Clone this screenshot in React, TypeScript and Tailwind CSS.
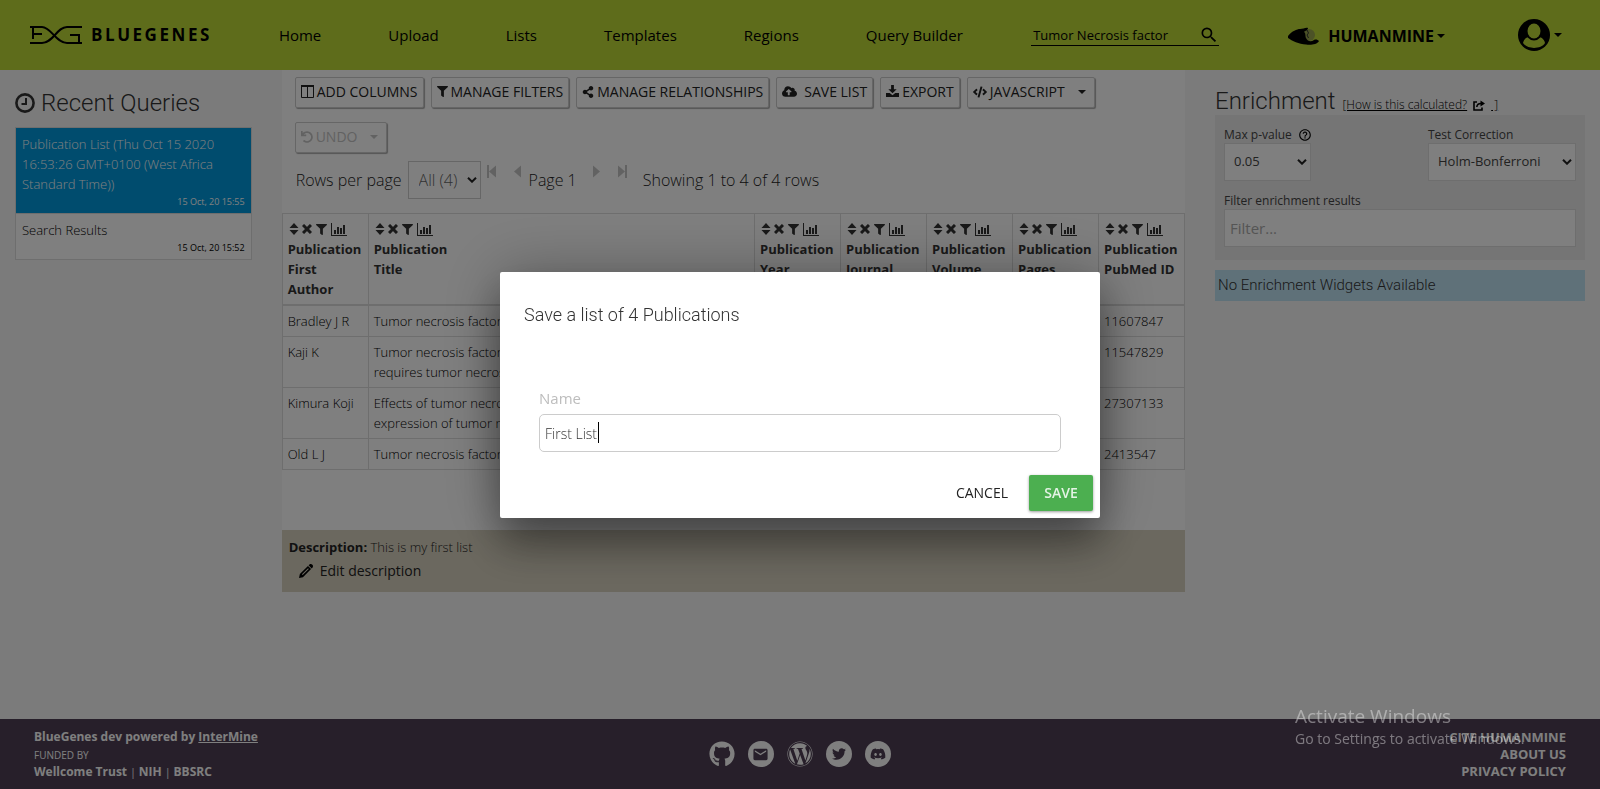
import React from "react";
import {
  FaCloudUploadAlt,
  FaCode,
  FaDiscord,
  FaFilter,
  FaGithub,
  FaShareAlt,
  FaTwitter,
  FaUndo,
  FaWordpress,
} from "react-icons/fa";
import { MdEmail, MdHelpOutline, MdSearch } from "react-icons/md";
import { ImPencil } from "react-icons/im";

type IconProps = { className?: string };

function Logo() {
  return (
    <svg viewBox="0 0 54 20" className="h-5 w-[54px]" fill="none" stroke="currentColor" strokeWidth="2" aria-hidden="true">
      <path d="M1 2H13C22 2 27 18 38 18H53M50 18V10H41" />
      <path d="M1 18H13C24 18 28 2 38 2H53" />
      <path d="M4 2V14M4 9H13" />
    </svg>
  );
}

function ClockIcon({ className }: IconProps) {
  return (
    <svg viewBox="0 0 20 20" className={className} fill="none" stroke="currentColor" aria-hidden="true">
      <circle cx="10" cy="10" r="8.6" strokeWidth="2.6" />
      <path d="M11 5V11H6.5" strokeWidth="2" />
    </svg>
  );
}

function ColumnsIcon({ className }: IconProps) {
  return (
    <svg viewBox="0 0 13 13" className={className} fill="none" stroke="currentColor" aria-hidden="true">
      <path d="M.5 1V12.500H12.500V1M6.500 1V12" />
      <path d="M0 1H13" strokeWidth="2" />
    </svg>
  );
}

function DownloadIcon({ className }: IconProps) {
  return (
    <svg viewBox="0 0 14 14" className={className} fill="currentColor" aria-hidden="true">
      <path d="M5.5 0h3v4.500h3L7 9 2.500 4.500h3zM0 8.500h4l3 2.500 3-2.500h4V13H0z" />
    </svg>
  );
}

function SortIcon() {
  return (
    <svg viewBox="0 0 10 12" className="h-3 w-[10px]" fill="currentColor" aria-hidden="true">
      <path d="M5 0L9.500 5H.5zM5 12L.5 7H9.500z" />
    </svg>
  );
}

function CrossIcon() {
  return (
    <svg viewBox="0 0 10 10" className="size-[10px]" fill="none" stroke="currentColor" strokeWidth="3" aria-hidden="true">
      <path d="M1 1L9 9M9 1L1 9" />
    </svg>
  );
}

function ChartIcon() {
  return (
    <svg viewBox="0 0 16 13" className="h-[13px] w-4" fill="currentColor" aria-hidden="true">
      <path d="M0 0h1v12h15v1H0zM3 7h2v4H3zM6 4h2v7H6zM9 5h2v6H9zM12 2h2v9h-2z" />
    </svg>
  );
}

function CaretIcon({ className }: IconProps) {
  return (
    <svg viewBox="0 0 8 4" className={className} fill="currentColor" aria-hidden="true">
      <path d="M0 0H8L4 4z" />
    </svg>
  );
}

function StepIcon({ bar, flip }: { bar?: boolean; flip?: boolean }) {
  return (
    <svg viewBox="0 0 9 13" className={flip ? "h-[13px] w-[9px] -scale-x-100" : "h-[13px] w-[9px]"} fill="currentColor" aria-hidden="true">
      <path d="M0 .5L7 6.500 0 12.500z" />
      {bar && <path d="M7 0h2v13H7z" />}
    </svg>
  );
}

function HandIcon() {
  return (
    <svg viewBox="0 0 32 20" className="h-5 w-8" aria-hidden="true">
      <circle cx="21" cy="9" r="6" fill="#98a44e" />
      <path d="M0 10C4 5 9 3 12 3C15 3 18 1 20 2C20 4 17 5 16 6C18 7 17 10 18 12C20 16 23 16 26 14C28 13 30 14 31 15C29 19 22 19 18 18.500C11 18 4 15 0 12Z" fill="#000" />
      <path d="M19 4L20.500 7L19 9L20.500 12" fill="none" stroke="#333" />
    </svg>
  );
}

function UserIcon() {
  return (
    <svg viewBox="0 0 32 32" className="size-8" aria-hidden="true">
      <circle cx="16" cy="16" r="16" fill="currentColor" />
      <path d="M5 24C6 19 10 18 12 17.500L20 17.500C22 18 26 19 27 24C23 30.500 9 30.500 5 24Z" fill="#bdd837" />
      <ellipse cx="16" cy="12" rx="8.500" ry="9.500" fill="currentColor" />
      <ellipse cx="16" cy="12" rx="6.500" ry="7.500" fill="#bdd837" />
    </svg>
  );
}

function ShareIcon({ className }: IconProps) {
  return (
    <svg viewBox="0 0 12 11" className={className} fill="none" stroke="currentColor" strokeWidth="1.6" aria-hidden="true">
      <path d="M4 2H1V10H9V7.500" />
      <path d="M3.800 7C4 4.500 5.500 3.500 8 3.500" />
      <path d="M7.500.5L12 3.500 7.500 6.500z" fill="currentColor" stroke="none" />
    </svg>
  );
}

function Chevron() {
  return (
    <svg viewBox="0 0 10 6" className="pointer-events-none absolute top-1/2 right-1 h-[6px] w-[10px] -translate-y-1/2" fill="none" stroke="#222" strokeWidth="2" aria-hidden="true">
      <path d="M1 0.700L5 4.700L9 0.700" />
    </svg>
  );
}

function ToolButton({ icon, label, caret, disabled }: { icon: React.ReactNode; label: string; caret?: boolean; disabled?: boolean }) {
  return (
    <button
      type="button"
      disabled={disabled}
      className="flex h-[31px] items-center gap-[3px] rounded-[2px] border border-[#ccc] bg-white px-[5px] pb-[2px] text-sm text-[#222] shadow-[1px_1px_1px_#aaa] disabled:text-[#c4c4c4]"
    >
      {icon}
      <span>{label}</span>
      {caret && <CaretIcon className="mr-[3px] ml-[10px] h-1 w-2" />}
    </button>
  );
}

const nav = ["Home", "Upload", "Lists", "Templates", "Regions", "Query Builder"];

const columns = ["First Author", "Title", "Year", "Journal", "Volume", "Pages", "PubMed ID"];

const rows = [
  ["Bradley J R", "Tumor necrosis factor", "11607847"],
  ["Kaji K", "Tumor necrosis factor\nrequires tumor necrosis", "11547829"],
  ["Kimura Koji", "Effects of tumor necrosis\nexpression of tumor necrosis", "27307133"],
  ["Old L J", "Tumor necrosis factor", "2413547"],
];

function Header() {
  return (
    <header className="flex h-[70px] items-center bg-[#bdd837] pr-[38px] pl-[29px] text-[15px] font-normal text-black">
      <a href="#home" className="flex items-center gap-2">
        <Logo />
        <span className="text-[17px] font-bold tracking-[0.15em]">BLUEGENES</span>
      </a>
      <nav className="ml-[67px] flex gap-[67px] pt-[2px]">
        {nav.map((item) => (
          <a key={item} href={"#" + item}>{item}</a>
        ))}
      </nav>
      <div className="ml-auto flex w-[188px] items-center border-b border-black">
        <input aria-label="Search" defaultValue="Tumor Necrosis factor" className="w-[164px] bg-transparent pl-[2px] text-[13px] leading-5 outline-none" />
        <button type="button" aria-label="Search" className="ml-auto"><MdSearch className="size-5" /></button>
      </div>
      <button type="button" className="ml-[69px] flex items-center gap-2 pt-[2px]">
        <HandIcon />
        <span className="flex items-center gap-[3px] text-base font-bold">HUMANMINE<CaretIcon className="h-1 w-2" /></span>
      </button>
      <button type="button" aria-label="Account" className="ml-[73px] flex items-center gap-1">
        <UserIcon />
        <CaretIcon className="h-1 w-2" />
      </button>
    </header>
  );
}

function RecentQueries() {
  return (
    <aside className="col-span-2 px-[15px] pt-[17px]">
      <h2 className="flex items-center gap-[6px] font-[Roboto] text-2xl leading-8 font-light text-[#333]">
        <ClockIcon className="size-5" />
        Recent Queries
      </h2>
      <ul className="mt-2 border border-[#ddd] bg-white text-[13px]">
        <li className="bg-[#0099dd] px-[6px] pt-[6px] pb-[3px] text-white">
          <a href="#list" className="block leading-5">Publication List (Thu Oct 15 2020 16:53:26 GMT+0100 (West Africa Standard Time))</a>
          <time className="block text-right text-[9px] leading-4 font-normal">15 Oct, 20 15:55</time>
        </li>
        <li className="border-t border-[#ddd] px-[6px] pt-[6px] pb-[3px] text-black">
          <a href="#results" className="block leading-5">Search Results</a>
          <time className="block text-right text-[9px] leading-4 font-normal">15 Oct, 20 15:52</time>
        </li>
      </ul>
    </aside>
  );
}

function Results() {
  return (
    <main className="col-span-7 px-[15px]">
      <div className="bg-white">
        <div className="flex flex-wrap gap-x-[7px] gap-y-[14px] px-[13px] pt-[7px] font-normal">
          <ToolButton icon={<ColumnsIcon className="size-[13px]" />} label="ADD COLUMNS" />
          <ToolButton icon={<FaFilter className="size-[11px]" />} label="MANAGE FILTERS" />
          <ToolButton icon={<FaShareAlt className="size-3" />} label="MANAGE RELATIONSHIPS" />
          <ToolButton icon={<FaCloudUploadAlt className="mr-1 size-[15px]" />} label="SAVE LIST" />
          <ToolButton icon={<DownloadIcon className="size-[13px]" />} label="EXPORT" />
          <ToolButton icon={<FaCode className="size-[14px]" />} label="JAVASCRIPT" caret />
          <div className="flex w-full">
            <ToolButton icon={<FaUndo className="size-3" />} label="UNDO" caret disabled />
          </div>
        </div>
        <div className="flex h-[53px] items-center pl-[14px] text-base text-[#222]">
          <label htmlFor="rows">Rows per page</label>
          <span className="relative ml-[6px] text-[#666]">
            <select id="rows" className="h-[38px] w-[73px] appearance-none border border-[#ccc] bg-white pl-[10px]">
              <option>All (4)</option>
            </select>
            <Chevron />
          </span>
          <span className="ml-[6px] flex gap-4 pb-4 text-[#c4c4c4]">
            <button type="button" aria-label="First page"><StepIcon bar flip /></button>
            <button type="button" aria-label="Previous page"><StepIcon flip /></button>
          </span>
          <span className="mr-4 ml-2">Page 1</span>
          <span className="mr-4 flex gap-4 pb-4 text-[#c4c4c4]">
            <button type="button" aria-label="Next page"><StepIcon /></button>
            <button type="button" aria-label="Last page"><StepIcon bar /></button>
          </span>
          <span>Showing 1 to 4 of 4 rows</span>
        </div>
        <table className="mt-[7px] w-full table-fixed border-collapse text-[13px] leading-5 text-black">
          <colgroup>
            <col className="w-[86px]" />
            <col />
            <col className="w-[86px]" />
            <col className="w-[86px]" />
            <col className="w-[86px]" />
            <col className="w-[86px]" />
            <col className="w-[86px]" />
          </colgroup>
          <thead>
            <tr>
              {columns.map((c) => (
                <th key={c} className="border border-b-2 border-[#ddd] p-[5px] text-left align-top font-bold text-[#333]">
                  <span className="flex h-5 items-center gap-[3px] pl-px">
                    <SortIcon />
                    <CrossIcon />
                    <FaFilter className="mx-px size-[11px]" />
                    <ChartIcon />
                  </span>
                  <span className="block w-[75px]">Publication {c}</span>
                </th>
              ))}
            </tr>
          </thead>
          <tbody>
            {rows.map(([author, title, id]) => (
              <tr key={id}>
                <td className="border border-[#ddd] p-[5px] align-top">{author}</td>
                <td className="border border-[#ddd] p-[5px] align-top whitespace-pre-line">{title}</td>
                <td className="border border-[#ddd]" />
                <td className="border border-[#ddd]" />
                <td className="border border-[#ddd]" />
                <td className="border border-[#ddd]" />
                <td className="border border-[#ddd] p-[5px] align-top">{id}</td>
              </tr>
            ))}
          </tbody>
        </table>
        <section className="mt-[60px] h-[62px] bg-[#d6d0be] px-[7px] pt-[7px] text-[13px] leading-5 text-[#222]">
          <p><strong className="font-bold">Description:</strong> This is my first list</p>
          <button type="button" className="mt-1 ml-[10px] flex items-center gap-[7px] text-sm font-normal">
            <ImPencil className="size-[14px] text-black" />
            Edit description
          </button>
        </section>
      </div>
    </main>
  );
}

function Enrichment() {
  return (
    <aside className="col-span-3 px-[15px] pt-[17px]">
      <div className="flex h-7 items-center gap-[7px]">
        <h2 className="font-[Roboto] text-2xl leading-7 font-light text-[#333]">Enrichment</h2>
        <a href="#how" className="flex items-center gap-[6px] pt-2 text-xs leading-4 text-black">
          <span className="underline">[How is this calculated?</span>
          <ShareIcon className="h-[11px] w-3" />
          <span className="underline">&nbsp;]</span>
        </a>
      </div>
      <form className="grid grid-cols-[87px_148px] justify-between bg-[#eaeaea] px-[9px] pt-3 pb-[13px] text-xs font-normal text-[#444]">
        <div>
          <label htmlFor="pvalue" className="flex h-4 items-center gap-[6px] whitespace-nowrap">Max p-value <MdHelpOutline className="size-[14px] shrink-0 text-black" /></label>
          <span className="relative block">
            <select id="pvalue" className="h-[38px] w-full appearance-none border border-[#ddd] bg-white pl-[9px] text-[13px]">
              <option>0.05</option>
            </select>
            <Chevron />
          </span>
        </div>
        <div>
          <label htmlFor="correction" className="flex h-4 items-center">Test Correction</label>
          <span className="relative block">
            <select id="correction" className="h-[38px] w-full appearance-none border border-[#ddd] bg-white pl-[9px] text-[13px]">
              <option>Holm-Bonferroni</option>
            </select>
            <Chevron />
          </span>
        </div>
        <div className="col-span-2 mt-3">
          <label htmlFor="filter" className="flex h-4 items-center">Filter enrichment results</label>
          <input id="filter" placeholder="Filter..." className="h-[38px] w-full border border-[#ddd] bg-white px-[5px] text-[15px] placeholder:text-[#aaa]" />
        </div>
      </form>
      <p className="mt-[10px] bg-[#bfe2f2] px-[3px] py-1 font-[Roboto] text-[15px] leading-[23px] text-[#333]">No Enrichment Widgets Available</p>
    </aside>
  );
}

function Footer() {
  const disc = "flex size-[26px] items-center justify-center rounded-full bg-white text-[#4e3e54]";
  return (
    <footer className="grid h-[70px] grid-cols-3 items-center bg-[#4e3e54] px-[34px] text-[13px] leading-[17px] font-bold text-white">
      <div className="text-xs leading-[17px]">
        <p>BlueGenes dev powered by <a href="#intermine" className="underline">InterMine</a></p>
        <p className="mt-[2px] text-[10px] leading-4 font-normal">FUNDED BY</p>
        <p><a href="#wt">Wellcome Trust</a> <span className="text-[10px] font-normal">|</span> <a href="#nih">NIH</a> <span className="text-[10px] font-normal">|</span> <a href="#bbsrc">BBSRC</a></p>
      </div>
      <div className="flex justify-center gap-[13px]">
        <a href="#github" aria-label="GitHub"><FaGithub className="size-[26px]" /></a>
        <a href="#mail" aria-label="Email" className={disc}><MdEmail className="size-[17px]" /></a>
        <a href="#blog" aria-label="Blog"><FaWordpress className="size-[26px]" /></a>
        <a href="#twitter" aria-label="Twitter" className={disc}><FaTwitter className="size-[14px]" /></a>
        <a href="#discord" aria-label="Discord" className={disc}><FaDiscord className="size-4" /></a>
      </div>
      <div className="flex flex-col items-end">
        <a href="#cite">CITE HUMANMINE</a>
        <a href="#about">ABOUT US</a>
        <a href="#privacy">PRIVACY POLICY</a>
      </div>
    </footer>
  );
}

function SaveDialog() {
  return (
    <div className="fixed inset-0 flex items-start justify-center bg-black/50 pt-[272px]">
      <div role="dialog" aria-labelledby="dialog-title" className="w-[600px] rounded-[2px] bg-white shadow-[0_27px_40px_rgba(0,0,0,0.35),0_0_60px_rgba(0,0,0,0.3)]">
        <h3 id="dialog-title" className="px-6 pt-[30px] font-[Roboto] text-lg leading-[26px] font-light text-[#333]">Save a list of 4 Publications</h3>
        <div className="px-[39px] pt-[58px]">
          <label htmlFor="name" className="block text-[15px] leading-6 font-normal text-[#bdbdbd]">Name</label>
          <div className="relative mt-1">
            <input id="name" defaultValue="First List" className="h-[38px] w-full rounded-[5px] border border-[#ccc] px-[5px] text-sm text-[#333] outline-none" />
            <span className="absolute top-2 left-[59px] h-[21px] w-px bg-black" />
          </div>
        </div>
        <div className="flex justify-end gap-[6px] px-[7px] pt-[23px] pb-[7px] text-sm">
          <button type="button" className="h-9 px-[15px] font-normal text-[#222]">CANCEL</button>
          <button type="button" className="h-9 w-16 rounded-[2px] bg-[#4caf50] font-semibold text-white/85 shadow-[0_1px_3px_rgba(0,0,0,0.4)]">SAVE</button>
        </div>
      </div>
    </div>
  );
}

export default function App() {
  return (
    <div className="flex min-h-screen flex-col bg-[#f7f7f7] font-['Open_Sans','Noto_Sans',sans-serif] text-sm font-light">
      <Header />
      <div className="grid grow grid-cols-12 items-start">
        <RecentQueries />
        <Results />
        <Enrichment />
      </div>
      <Footer />
      <SaveDialog />
      <div className="pointer-events-none fixed right-[69px] bottom-10 w-[236px] font-normal whitespace-nowrap text-white/40">
        <p className="text-[19px] leading-[26px]">Activate Windows</p>
        <p className="text-sm leading-5">Go to Settings to activate Windows.</p>
      </div>
    </div>
  );
}
